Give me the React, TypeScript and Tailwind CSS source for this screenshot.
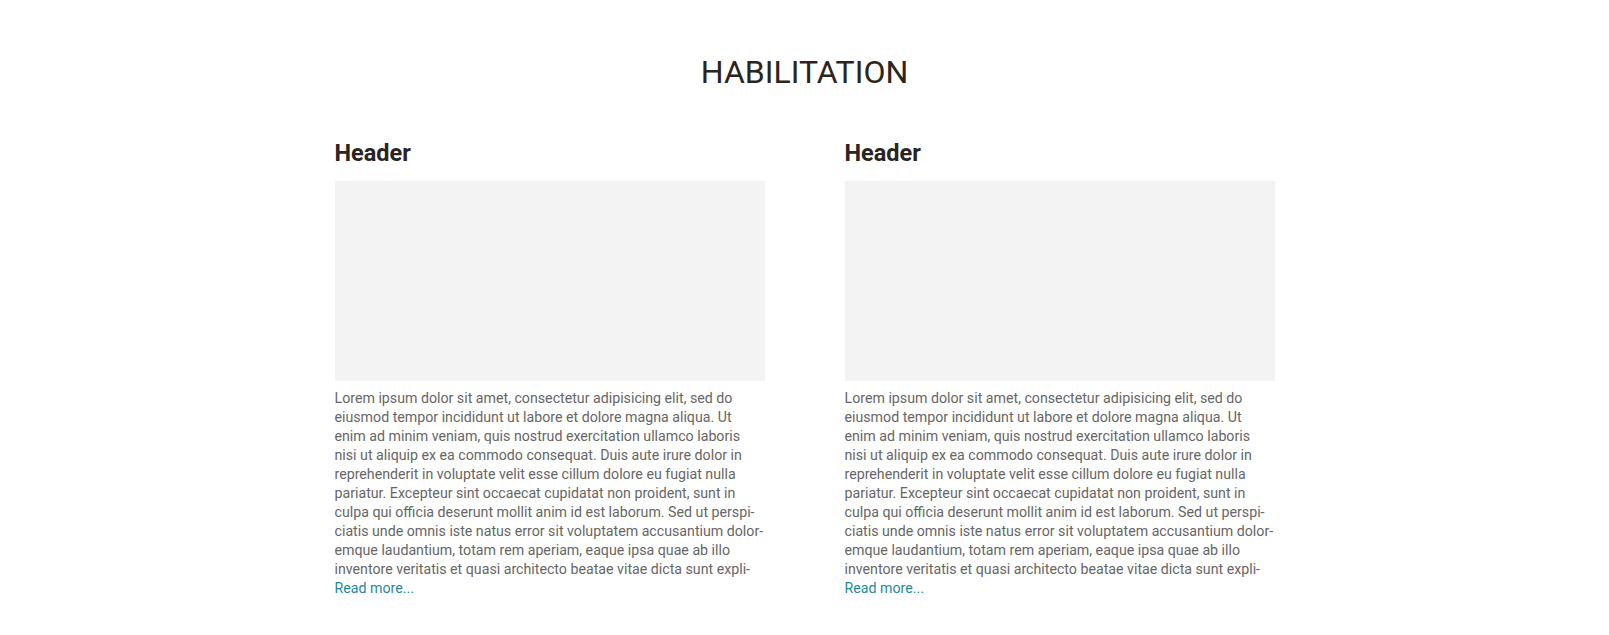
import React from "react";

const lines = [
  "Lorem ipsum dolor sit amet, consectetur adipisicing elit, sed do",
  "eiusmod tempor incididunt ut labore et dolore magna aliqua. Ut",
  "enim ad minim veniam, quis nostrud exercitation ullamco laboris",
  "nisi ut aliquip ex ea commodo consequat. Duis aute irure dolor in",
  "reprehenderit in voluptate velit esse cillum dolore eu fugiat nulla",
  "pariatur. Excepteur sint occaecat cupidatat non proident, sunt in",
  "culpa qui officia deserunt mollit anim id est laborum. Sed ut perspi-",
  "ciatis unde omnis iste natus error sit voluptatem accusantium dolor-",
  "emque laudantium, totam rem aperiam, eaque ipsa quae ab illo",
  "inventore veritatis et quasi architecto beatae vitae dicta sunt expli-",
];

function Card() {
  return (
    <div className="w-[430px] flex flex-col">
      <h2 className="text-[23.5px] leading-[26px] font-bold text-[#2b2420]">Header</h2>
      <div className="mt-[15px] h-[200px] bg-[#f3f3f3]" />
      <div className="mt-[8px] text-[14.2px] leading-[19px] text-[#666666] whitespace-nowrap">
        {lines.map((l, i) => (
          <div key={i}>{l}</div>
        ))}
        <a className="block text-[#1f8a98]" href="#">Read more...</a>
      </div>
    </div>
  );
}

export default function App() {
  return (
    <div className="w-full min-h-[635px] bg-white pt-[53px] font-['Roboto','Liberation_Sans',sans-serif]">
      <h1 className="text-center text-[32px] leading-[38px] font-normal text-[#2b2420]">HABILITATION</h1>
      <div className="mt-[49px] flex justify-center gap-[80px]">
        <Card />
        <Card />
      </div>
    </div>
  );
}
